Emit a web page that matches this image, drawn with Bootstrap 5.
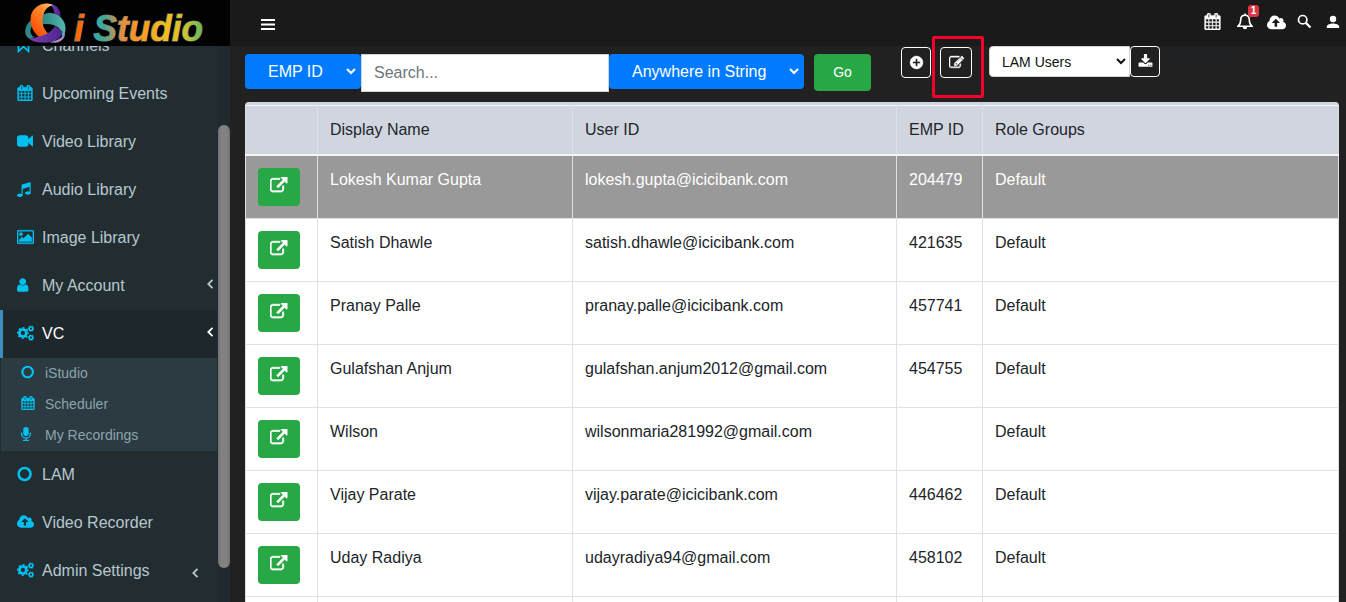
<!DOCTYPE html>
<html lang="en">
<head>
<meta charset="utf-8">
<meta name="viewport" content="width=device-width, initial-scale=1">
<title>iStudio - LAM Users</title>
<link href="https://cdn.jsdelivr.net/npm/bootstrap@5.3.0/dist/css/bootstrap.min.css" rel="stylesheet">
<style>
body{font-family:"Liberation Sans",Arial,sans-serif;background:#212121;height:602px;overflow:hidden;font-size:16px;line-height:24px;color:#212529}
.ico{width:1em;height:1em;fill:currentColor;flex:none;overflow:visible}
.bold-ico{stroke:currentColor;stroke-width:50}
.topbar{height:46px;background:#1a1a1a}
.brand-box{width:230px;height:46px;background:rgba(0,0,0,.9);z-index:5}
.side{width:230px;height:602px;background:#222d32;margin-top:-46px;overflow:hidden}
.side-menu{width:217px;margin-top:-26px}
.side-menu .item{height:48px;padding-left:14px;border-left:3px solid transparent;color:#b8c7ce;text-decoration:none}
.side-menu .item .ico,.submenu .ico{color:#00c0ef;margin-top:-2px;stroke:#00c0ef;stroke-width:.1px}
.icon-cell{width:25px;display:flex;flex:none;align-items:center}
.side-menu .item.current{background:#1e282c;border-left-color:#3c8dbc;color:#fff}
.chev{margin-left:auto;margin-right:3px;width:8px;height:12px;fill:none;stroke:currentColor;stroke-width:1.8}
.submenu{background:#2c3b41;margin-left:1px;height:93px;font-size:14px}
.submenu a{height:31px;padding:0 0 2px 20px;color:#8aa4af;text-decoration:none}
.submenu .icon-cell{width:24px}
.track{width:12px;background:#1f292e;padding-top:125px}
.thumb{height:443px;border-radius:6px;background:linear-gradient(90deg,#707070,#828282 25%,#828282 75%,#707070)}
.main-col{padding:0 7px 0 15px;height:556px}
.tools{height:56px;padding-top:8px}
.blue-select{background:#007bff;color:#fff;border:0;border-radius:4px;height:35px;font-size:16px;padding:0 0 0 19px;border-right:2px solid #007bff}
.search-box{width:248px;height:38px;border-radius:0;border:1px solid #ced4da;padding:6px 12px}
.search-box::placeholder{color:#6c757d}
.btn-go{background:#28a745;color:#fff;width:57px;height:37px;font-size:14px;border-radius:4px;padding:0;margin-left:10px}
.btn-dark-line{background:#212121;border:1px solid #fff;border-radius:4px;color:#fff;width:30px;height:31px;padding:0 0 1px;display:flex;align-items:center;justify-content:center;font-size:15px}
.white-select{width:141px;height:31px;background:#fff;color:#111;border:1px solid #ced4da;border-radius:4px 0 0 4px;font-size:14px;padding:0 0 0 8px}
.hl{left:-8px;top:-11px;width:52px;height:62px;border:3px solid #f5002b;border-radius:2px;pointer-events:none;z-index:6}
.grid-wrap{width:1094px;background:#d1d5df;border-radius:4px;padding-top:3px}
.users{table-layout:fixed;width:1094px;margin:0;background:#fff;border-color:#dee2e6}
.users>:not(caption)>*>*{padding:12px;vertical-align:top;border-width:1px;border-color:#dee2e6;background:#fff;color:#212529;box-shadow:none}
.users>thead>tr>th{background:#d1d5df;font-weight:400;border-top-color:#f4f5f7;border-bottom:2px solid #f4f5f7}
.users>tbody>tr.picked>td{background:#999;color:#fff}
.btn-open{width:42px;height:38px;border-radius:4px;background:#28a745;color:#fff;padding:0 0 3px;display:flex;align-items:center;justify-content:center;font-size:17.500px}
.note-badge{left:11px;top:-8px;width:11px;height:12px;border-radius:3px;background:#dc3545;color:#fff;font:bold 10px/12px "Liberation Sans",sans-serif;text-align:center}
.ghost{color:#1d2327}
</style>
</head>
<body>
<svg class="d-none">
<symbol id="calendar" viewBox="0 0 1792 1792"><path d="M192 1664h288v-288h-288v288zm352 0h320v-288h-320v288zm-352-352h288v-320h-288v320zm352 0h320v-320h-320v320zm-352-384h288v-288h-288v288zm736 736h320v-288h-320v288zm-384-736h320v-288h-320v288zm768 736h288v-288h-288v288zm-384-352h320v-320h-320v320zm-352-864v-288q0-13-9.5-22.5t-22.5-9.5h-64q-13 0-22.5 9.5t-9.5 22.5v288q0 13 9.5 22.5t22.5 9.5h64q13 0 22.5-9.5t9.5-22.5zm736 864h288v-320h-288v320zm-384-384h320v-288h-320v288zm384 0h288v-288h-288v288zm32-480v-288q0-13-9.5-22.5t-22.5-9.5h-64q-13 0-22.5 9.5t-9.5 22.5v288q0 13 9.5 22.5t22.5 9.5h64q13 0 22.5-9.5t9.5-22.5zm384-64v1280q0 52-38 90t-90 38h-1408q-52 0-90-38t-38-90v-1280q0-52 38-90t90-38h128v-96q0-66 47-113t113-47h64q66 0 113 47t47 113v96h384v-96q0-66 47-113t113-47h64q66 0 113 47t47 113v96h128q52 0 90 38t38 90z" stroke="currentColor" stroke-width="45"/></symbol>
<symbol id="video" viewBox="0 0 1792 1792"><path d="M1792 352v1088q0 42-39 59-13 5-25 5-27 0-45-19l-403-403v166q0 119-84.5 203.5t-203.5 84.5h-704q-119 0-203.5-84.5t-84.5-203.5v-704q0-119 84.5-203.5t203.5-84.5h704q119 0 203.5 84.5t84.5 203.5v165l403-402q18-19 45-19 12 0 25 5 39 17 39 59z"/></symbol>
<symbol id="music" viewBox="128 0 1792 1792"><path d="M1664 224v1120q0 50-34 89t-86 60.5-103.5 32-96.5 10.5-96.5-10.5-103.5-32-86-60.5-34-89 34-89 86-60.5 103.5-32 96.5-10.5q105 0 192 39v-537l-768 237v709q0 50-34 89t-86 60.5-103.5 32-96.5 10.5-96.5-10.5-103.5-32-86-60.5-34-89 34-89 86-60.5 103.5-32 96.5-10.5q105 0 192 39v-967q0-31 19-56.5t49-35.5l832-256q12-4 28-4 40 0 68 28t28 68z"/></symbol>
<symbol id="picture" viewBox="-64 0 1920 1792"><path d="M576 576q0 80-56 136t-136 56-136-56-56-136 56-136 136-56 136 56 56 136zm1024 384v448h-1408v-192l320-320 160 160 512-512zm96-704h-1600q-13 0-22.5 9.5t-9.5 22.5v1216q0 13 9.5 22.5t22.5 9.5h1600q13 0 22.5-9.5t9.5-22.5v-1216q0-13-9.5-22.5t-22.5-9.5zm160 32v1216q0 66-47 113t-113 47h-1600q-66 0-113-47t-47-113v-1216q0-66 47-113t113-47h1600q66 0 113 47t47 113z" stroke="currentColor" stroke-width="45"/></symbol>
<symbol id="user" viewBox="256 0 1792 1792"><path d="M1536 1399q0 109-62.5 187t-150.5 78h-854q-88 0-150.5-78t-62.5-187q0-85 8.5-160.5t31.5-152 58.5-131 94-89 134.5-34.5q131 128 313 128t313-128q76 0 134.5 34.5t94 89 58.5 131 31.5 152 8.5 160.5zm-256-887q0 159-112.5 271.5t-271.5 112.5-271.5-112.5-112.5-271.5 112.5-271.5 271.5-112.5 271.5 112.5 112.5 271.5z"/></symbol>
<symbol id="cloud" viewBox="-64 0 1920 1792"><path d="M1216 864q0-14-9-23l-352-352q-9-9-23-9t-23 9l-351 351q-10 12-10 24 0 14 9 23t23 9h224v352q0 13 9.5 22.5t22.5 9.5h192q13 0 22.5-9.5t9.5-22.5v-352h224q13 0 22.5-9.5t9.5-22.5zm640 288q0 159-112.5 271.5t-271.5 112.5h-1088q-185 0-316.5-131.5t-131.5-316.5q0-130 70-240t188-165q-2-30-2-43 0-212 150-362t362-150q156 0 285.5 87t188.5 231q71-62 166-62 106 0 181 75t75 181q0 76-41 138 130 31 213.5 135.5t83.5 238.5z"/></symbol>
<symbol id="cogs" viewBox="0 0 17 16"><g fill="none" stroke="currentColor"><circle cx="5.9" cy="8" r="3.500" stroke-width="2.700"/><circle cx="5.9" cy="8" r="5.1" stroke-width="1.700" stroke-dasharray="2 2.005" stroke-dashoffset="1"/><circle cx="14" cy="3.6" r="1.9" stroke-width="1.600"/><circle cx="14" cy="3.6" r="2.8" stroke-width="1" stroke-dasharray="1.400 1.530" stroke-dashoffset=".7"/><circle cx="14" cy="12.6" r="1.9" stroke-width="1.600"/><circle cx="14" cy="12.6" r="2.8" stroke-width="1" stroke-dasharray="1.400 1.530" stroke-dashoffset=".7"/></g></symbol>
<symbol id="ring" viewBox="0 0 16 16"><circle cx="7.600" cy="8" r="6" fill="none" stroke="currentColor" stroke-width="2.500"/></symbol>
<symbol id="mic" viewBox="0 0 14 14"><rect x="2.3" y="0" width="5.400" height="9" rx="2.700"/><path d="M.6 5.5v1.2a4.4 4.4 0 0 0 8.8 0V5.500M5 11v2M2 13.300h6" fill="none" stroke="currentColor" stroke-width="1.300"/></symbol>
<symbol id="bookmark" viewBox="0 0 16 16"><path d="M1.500 1.500h10v12.800L6.500 9.700l-5 4.600z" fill="none" stroke="currentColor" stroke-width="1.700"/></symbol>
<symbol id="plus" viewBox="0 0 1792 1792"><path d="M1344 960v-128q0-26-19-45t-45-19h-256v-256q0-26-19-45t-45-19h-128q-26 0-45 19t-19 45v256h-256q-26 0-45 19t-19 45v128q0 26 19 45t45 19h256v256q0 26 19 45t45 19h128q26 0 45-19t19-45v-256h256q26 0 45-19t19-45zm320-64q0 209-103 385.5t-279.5 279.5-385.5 103-385.5-103-279.5-279.5-103-385.5 103-385.5 279.5-279.5 385.5-103 385.5 103 279.5 279.5 103 385.5z"/></symbol>
<symbol id="edit" viewBox="0 0 1792 1792"><path d="M888 1184l116-116-152-152-116 116v56h96v96h56zm440-720q-16-16-33 1l-350 350q-17 17-1 33t33-1l350-350q17-17 1-33zm80 594v190q0 119-84.5 203.5t-203.5 84.5h-832q-119 0-203.5-84.5t-84.5-203.5v-832q0-119 84.5-203.5t203.5-84.5h832q63 0 117 25 15 7 18 23 3 17-9 29l-49 49q-14 14-32 8-23-6-45-6h-832q-66 0-113 47t-47 113v832q0 66 47 113t113 47h832q66 0 113-47t47-113v-126q0-13 9-22l64-64q15-15 35-7t20 29zm-96-738l288 288-672 672h-288v-288zm444 132l-92 92-288-288 92-92q28-28 68-28t68 28l152 152q28 28 28 68t-28 68z"/></symbol>
<symbol id="download" viewBox="0 0 1792 1792"><path d="M1344 1344q0-26-19-45t-45-19-45 19-19 45 19 45 45 19 45-19 19-45zm256 0q0-26-19-45t-45-19-45 19-19 45 19 45 45 19 45-19 19-45zm128-224v320q0 40-28 68t-68 28h-1472q-40 0-68-28t-28-68v-320q0-40 28-68t68-28h465l135 136q58 56 136 56t136-56l136-136h464q40 0 68 28t28 68zm-325-569q17 41-14 70l-448 448q-18 19-45 19t-45-19l-448-448q-31-29-14-70 17-39 59-39h256v-448q0-26 19-45t45-19h256q26 0 45 19t19 45v448h256q42 0 59 39z"/></symbol>
<symbol id="open" viewBox="0 0 1792 1792"><path d="M1408 928v320q0 119-84.5 203.5t-203.5 84.5h-832q-119 0-203.5-84.5t-84.5-203.5v-832q0-119 84.5-203.5t203.5-84.5h704q14 0 23 9t9 23v64q0 14-9 23t-23 9h-704q-66 0-113 47t-47 113v832q0 66 47 113t113 47h832q66 0 113-47t47-113v-320q0-14 9-23t23-9h64q14 0 23 9t9 23zm384-864v512q0 26-19 45t-45 19-45-19l-176-176-652 652q-10 10-23 10t-23-10l-114-114q-10-10-10-23t10-23l652-652-176-176q-19-19-19-45t19-45 45-19h512q26 0 45 19t19 45z" stroke="currentColor" stroke-width="70"/></symbol>
<symbol id="chev" viewBox="0 0 8 12"><path d="M6.500 1.800 2.300 6l4.200 4.200"/></symbol>
</svg>

<nav class="topbar d-flex position-relative">
  <a class="brand-box d-block flex-shrink-0" href="#">
    <svg class="d-block" width="230" height="46" viewBox="0 0 230 46">
      <defs>
        <linearGradient id="gWord" gradientUnits="userSpaceOnUse" x1="72" y1="0" x2="202" y2="0"><stop offset="0" stop-color="#ff6a00"/><stop offset=".1" stop-color="#ff6a00"/><stop offset=".14" stop-color="#1fb5b0"/><stop offset=".24" stop-color="#3aa99b"/><stop offset=".36" stop-color="#d99048"/><stop offset=".5" stop-color="#ff941c"/><stop offset=".72" stop-color="#f2bd1c"/><stop offset=".86" stop-color="#d3c42c"/><stop offset="1" stop-color="#64bd55"/></linearGradient>
        <linearGradient id="gO" x1="1" y1="0" x2=".3" y2="1"><stop offset="0" stop-color="#ffd27a"/><stop offset=".35" stop-color="#ff8a2b"/><stop offset="1" stop-color="#ff4300"/></linearGradient>
        <linearGradient id="gT" x1="0" y1="0" x2="1" y2="0"><stop offset="0" stop-color="#2d8582"/><stop offset="1" stop-color="#52b8ae"/></linearGradient>
        <linearGradient id="gP" x1="0" y1="0" x2="1" y2="0"><stop offset="0" stop-color="#7b3fae"/><stop offset="1" stop-color="#4b2590"/></linearGradient>
      </defs>
      <path d="M49 4c7 0 12 5 11.500 13l-6-2.500c0-5-2-8-5.500-10.500z" fill="url(#gP)"/>
      <path d="M31 20c-7 6-8 16-1 19l4-2c-5-3-4-9-1-12z" fill="#2f8683"/>
      <path d="M42 15c11-6 24 2 23.500 14 0 4-1.500 7-3.500 8.500 1-9-7-15-20-13z" fill="url(#gT)"/>
      <path d="M53 5C45 1 34 5 31 15c-2 11 3 20 14 26l7-5c-8-4-12-13-8-23 2-5 5-7 9-8z" fill="url(#gO)"/>
      <path d="M29 38.500C39 37 50 35 55 26l7.500 5.500C62 39 52 43.500 41 42.500c-5 0-9-1.500-12-4z" fill="url(#gP)"/>
      <path d="M49 42c7-.5 13-4 16-9 .5 5-4 9-8 9.500-3 .5-6 .3-8-.5z" fill="#a58bc4"/>
      <g font-family="Liberation Sans" font-weight="bold" font-style="italic" font-size="36">
        <text x="74" y="41" textLength="129" lengthAdjust="spacingAndGlyphs" fill="url(#gWord)" stroke="#777" stroke-width="1.200" paint-order="stroke">i Studio</text>
      </g>
    </svg>
  </a>
  <div class="d-flex flex-grow-1 align-items-center text-white">
    <svg style="margin-left:31px;margin-top:3px" width="14" height="12" viewBox="0 0 14 12"><path d="M0 1h14M0 5.500h14M0 10h14" stroke="#fff" stroke-width="2"/></svg>
    <div class="ms-auto d-flex align-items-center" style="height:43px">
      <svg class="ico mb-1" style="font-size:17px;margin-right:16px"><use href="#calendar"/></svg>
      <div class="position-relative" style="width:16px;margin:-3px 14px 0 0">
        <svg class="d-block" width="16" height="17" viewBox="0 0 16 17"><path d="M8 2.300c-3 0-4.300 2-4.300 4.600 0 3.300-1 5-2.600 6.300h13.800c-1.600-1.300-2.600-3-2.600-6.300 0-2.600-1.300-4.600-4.300-4.600z" fill="none" stroke="#fff" stroke-width="1.600"/><path d="M7.200.5h1.600v2H7.200zM5.800 14h4.400a2.200 2.200 0 0 1-4.400 0z" fill="#fff"/></svg>
        <span class="note-badge position-absolute">1</span>
      </div>
      <svg class="ico" style="width:19px;height:18px;margin-right:11px"><use href="#cloud"/></svg>
      <svg width="15" height="15" viewBox="0 0 15 15" style="margin:-3px 14px 0 0"><circle cx="5.700" cy="5.700" r="4.200" fill="none" stroke="#fff" stroke-width="1.700"/><path d="M8.900 8.900l4.600 4.600" stroke="#fff" stroke-width="2.200"/></svg>
      <svg width="14" height="14" viewBox="0 0 14 14" style="margin:-2px 6px 0 0"><circle cx="7" cy="4" r="3.200" fill="#fff"/><path d="M.8 13v-1.500C.8 9.500 4.500 8.500 7 8.500s6.200 1 6.200 3V13z" fill="#fff"/></svg>
    </div>
  </div>
</nav>

<div class="d-flex">
  <aside class="side d-flex flex-shrink-0">
    <div class="side-menu flex-shrink-0">
      <a class="item d-flex align-items-center" href="#"><div class="icon-cell"><svg class="ico" style="width:17px"><use href="#cloud"/></svg></div>Upload Media</a>
      <a class="item d-flex align-items-center" href="#"><div class="icon-cell"><svg class="ico"><use href="#bookmark"/></svg></div>Channels</a>
      <a class="item d-flex align-items-center" href="#"><div class="icon-cell"><svg class="ico"><use href="#calendar"/></svg></div>Upcoming Events</a>
      <a class="item d-flex align-items-center" href="#"><div class="icon-cell"><svg class="ico"><use href="#video"/></svg></div>Video Library</a>
      <a class="item d-flex align-items-center" href="#"><div class="icon-cell"><svg class="ico"><use href="#music"/></svg></div>Audio Library</a>
      <a class="item d-flex align-items-center" href="#"><div class="icon-cell"><svg class="ico" style="width:17px"><use href="#picture"/></svg></div>Image Library</a>
      <a class="item d-flex align-items-center" href="#"><div class="icon-cell"><svg class="ico"><use href="#user"/></svg></div>My Account<svg class="chev" style="margin-bottom:5px"><use href="#chev"/></svg></a>
      <a class="item current d-flex align-items-center" href="#"><div class="icon-cell"><svg class="ico" style="width:17px"><use href="#cogs"/></svg></div>VC<svg class="chev" style="margin-bottom:5px"><use href="#chev"/></svg></a>
      <div class="submenu">
        <a class="d-flex align-items-center" href="#"><div class="icon-cell"><svg class="ico"><use href="#ring"/></svg></div>iStudio</a>
        <a class="d-flex align-items-center" href="#"><div class="icon-cell"><svg class="ico"><use href="#calendar"/></svg></div>Scheduler</a>
        <a class="d-flex align-items-center" href="#"><div class="icon-cell"><svg class="ico"><use href="#mic"/></svg></div>My Recordings</a>
      </div>
      <a class="item d-flex align-items-center" href="#"><div class="icon-cell"><svg class="ico"><use href="#ring"/></svg></div>LAM</a>
      <a class="item d-flex align-items-center" href="#"><div class="icon-cell"><svg class="ico" style="width:17px"><use href="#cloud"/></svg></div>Video Recorder</a>
      <a class="item d-flex align-items-center" href="#"><div class="icon-cell"><svg class="ico" style="width:17px"><use href="#cogs"/></svg></div>Admin Settings<svg class="chev mt-1" style="margin-right:18px"><use href="#chev"/></svg></a>
    </div>
    <div class="track ms-auto"><div class="thumb"></div></div>
  </aside>

  <main class="main-col flex-grow-1">
    <div class="tools d-flex align-items-start">
      <select class="blue-select" style="width:116px"><option>EMP ID</option></select>
      <input class="form-control search-box flex-shrink-0" placeholder="Search...">
      <select class="blue-select" style="width:195px"><option>Anywhere in String</option></select>
      <button class="btn btn-go">Go</button>
      <div class="d-flex" style="margin:-7px 0 0 30px">
        <button class="btn-dark-line"><svg class="ico bold-ico"><use href="#plus"/></svg></button>
        <div class="position-relative" style="margin-left:9px">
          <button class="btn-dark-line" style="width:32px"><svg class="ico bold-ico"><use href="#edit"/></svg></button>
          <div class="hl position-absolute"></div>
        </div>
      </div>
      <div class="d-flex align-items-center" style="margin:-8px 0 0 17px">
        <select class="white-select"><option>LAM Users</option></select>
        <button class="btn-dark-line"><svg class="ico"><use href="#download"/></svg></button>
        <span class="ghost ms-1">Download</span>
      </div>
    </div>
    <div class="grid-wrap">
      <table class="table table-bordered users">
        <colgroup><col style="width:72px"><col style="width:255px"><col style="width:324px"><col style="width:86px"><col></colgroup>
        <thead><tr><th></th><th>Display Name</th><th>User ID</th><th>EMP ID</th><th>Role Groups</th></tr></thead>
        <tbody>
          <tr class="picked"><td><button class="btn btn-open"><svg class="ico"><use href="#open"/></svg></button></td><td>Lokesh Kumar Gupta</td><td>lokesh.gupta@icicibank.com</td><td>204479</td><td>Default</td></tr>
          <tr><td><button class="btn btn-open"><svg class="ico"><use href="#open"/></svg></button></td><td>Satish Dhawle</td><td>satish.dhawle@icicibank.com</td><td>421635</td><td>Default</td></tr>
          <tr><td><button class="btn btn-open"><svg class="ico"><use href="#open"/></svg></button></td><td>Pranay Palle</td><td>pranay.palle@icicibank.com</td><td>457741</td><td>Default</td></tr>
          <tr><td><button class="btn btn-open"><svg class="ico"><use href="#open"/></svg></button></td><td>Gulafshan Anjum</td><td>gulafshan.anjum2012@gmail.com</td><td>454755</td><td>Default</td></tr>
          <tr><td><button class="btn btn-open"><svg class="ico"><use href="#open"/></svg></button></td><td>Wilson</td><td>wilsonmaria281992@gmail.com</td><td></td><td>Default</td></tr>
          <tr><td><button class="btn btn-open"><svg class="ico"><use href="#open"/></svg></button></td><td>Vijay Parate</td><td>vijay.parate@icicibank.com</td><td>446462</td><td>Default</td></tr>
          <tr><td><button class="btn btn-open"><svg class="ico"><use href="#open"/></svg></button></td><td>Uday Radiya</td><td>udayradiya94@gmail.com</td><td>458102</td><td>Default</td></tr>
          <tr><td></td><td></td><td></td><td></td><td></td></tr>
        </tbody>
      </table>
    </div>
  </main>
</div>
<script src="https://cdn.jsdelivr.net/npm/bootstrap@5.3.0/dist/js/bootstrap.bundle.min.js"></script>
</body>
</html>
